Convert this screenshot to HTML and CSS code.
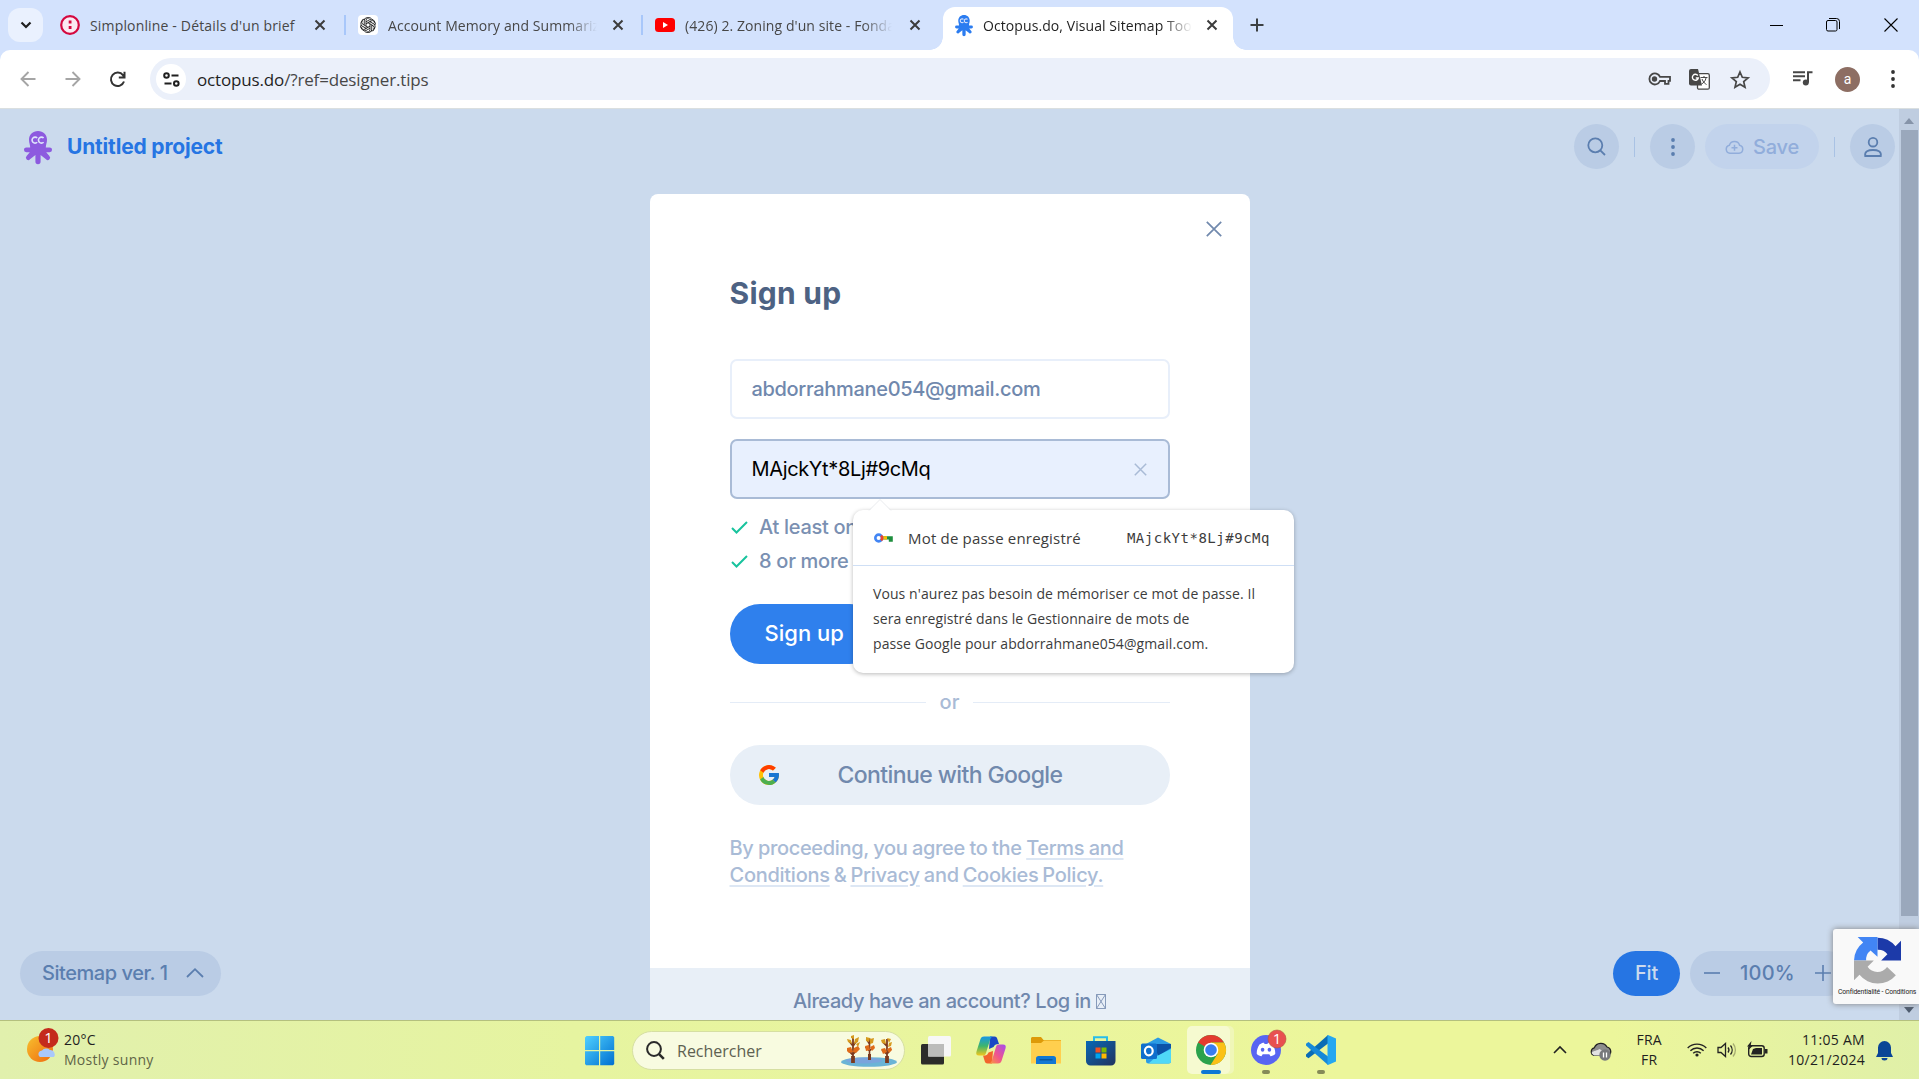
FILE: index.html
```html
<!DOCTYPE html>
<html lang="fr">
<head>
<meta charset="utf-8">
<title>Octopus.do, Visual Sitemap Tool</title>
<link rel="stylesheet" href="styles.css">
</head>
<body>
<div class="screen">
  <header class="tabstrip">
    <div class="tab-search"><svg width="12" height="8" viewBox="0 0 12 8"><path d="M1.5 1.5 6 6l4.500-4.500" fill="none" stroke="#1f1f1f" stroke-width="2.200"/></svg></div>
    <div class="tab tab-a">
      <svg width="20" height="20" viewBox="0 0 20 20"><circle cx="10" cy="10" r="8.800" fill="#fbe9f1" stroke="#d4083f" stroke-width="2.200"/><rect x="8.700" y="5.500" width="2.800" height="3" fill="#d4083f"/><rect x="8.700" y="11" width="2.800" height="3" fill="#d4083f"/></svg>
      <span class="tab-title">Simplonline - Détails d'un brief</span>
      <svg class="x" width="12" height="12" viewBox="0 0 12 12"><path d="M1.500 1.500l9 9M10.500 1.500l-9 9"/></svg>
    </div>
    <i class="tab-sep"></i>
    <div class="tab tab-b">
      <svg width="20" height="20" viewBox="0 0 20 20"><rect width="20" height="20" rx="4" fill="#fff"/><g fill="none" stroke="#222" stroke-width=".9"><path id="petal" d="M8 11.200V5.500a3 3 0 0 1 5.600-1.400M8 6.800l4-2.300a3 3 0 0 1 4.300 3.300"/><use href="#petal" transform="rotate(60 10 10)"/><use href="#petal" transform="rotate(120 10 10)"/><use href="#petal" transform="rotate(180 10 10)"/><use href="#petal" transform="rotate(240 10 10)"/><use href="#petal" transform="rotate(300 10 10)"/></g></svg>
      <span class="tab-title fade">Account Memory and Summarization</span>
      <svg class="x" width="12" height="12" viewBox="0 0 12 12"><path d="M1.500 1.500l9 9M10.500 1.500l-9 9"/></svg>
    </div>
    <i class="tab-sep"></i>
    <div class="tab tab-c">
      <svg width="20" height="20" viewBox="0 0 20 20"><rect y="3" width="20" height="14" rx="3.500" fill="#f00"/><path d="M8 7l5 3-5 3z" fill="#fff"/></svg>
      <span class="tab-title fade">(426) 2. Zoning d'un site - Fondamentaux</span>
      <svg class="x" width="12" height="12" viewBox="0 0 12 12"><path d="M1.500 1.500l9 9M10.500 1.500l-9 9"/></svg>
    </div>
    <div class="tab tab-active">
      <svg width="18" height="21" viewBox="0 0 28 33" fill="#2b7cf0"><use href="#octopus"/></svg>
      <span class="tab-title fade">Octopus.do, Visual Sitemap Tool</span>
      <svg class="x" width="12" height="12" viewBox="0 0 12 12"><path d="M1.500 1.500l9 9M10.500 1.500l-9 9"/></svg>
    </div>
    <svg class="new-tab" width="14" height="14" viewBox="0 0 14 14"><path d="M7 .5v13M.5 7h13" stroke="#3c4043" stroke-width="2"/></svg>
    <div class="win-controls">
      <svg width="13" height="13" viewBox="0 0 13 13"><path d="M0 6.500h13" stroke="#000"/></svg>
      <svg width="14" height="14" viewBox="0 0 14 14" fill="none" stroke="#000"><rect x=".5" y="2.500" width="10.500" height="10.500" rx="1.500"/><path d="M3 .5h7.500a3 3 0 0 1 3 3v7.500"/></svg>
      <svg width="14" height="14" viewBox="0 0 14 14"><path d="M.5 .5l13 13M13.500 .5l-13 13" stroke="#000" stroke-width="1.100"/></svg>
    </div>
  </header>

  <nav class="toolbar">
    <svg width="16" height="16" viewBox="0 0 16 16" fill="none" stroke="#a5a5a5" stroke-width="1.900"><path d="M15.500 8H2M8.500 1 1.500 8l7 7"/></svg>
    <svg class="nav-fwd" width="16" height="16" viewBox="0 0 16 16" fill="none" stroke="#a5a5a5" stroke-width="1.900"><path d="M.5 8H14M7.500 1l7 7-7 7"/></svg>
    <svg class="nav-reload" width="17" height="17" viewBox="0 0 17 17" fill="none" stroke="#333" stroke-width="2"><path d="M15 10.500A6.700 6.700 0 1 1 14 4.200l1 1.600M15.500 .8v5.700H9.800"/></svg>
    <div class="omnibox">
      <span class="site-info"><svg width="17" height="15" viewBox="0 0 17 15" fill="none" stroke="#1f1f1f" stroke-width="2"><circle cx="3.500" cy="3.500" r="2.300"/><path d="M8.500 3.500h7M1.500 11.500h7"/><circle cx="13.300" cy="11.500" r="2.300"/></svg></span>
      <span class="url">octopus.do<b>/?ref=designer.tips</b></span>
      <svg width="23" height="14" viewBox="0 0 23 14" fill="none" stroke="#474747" stroke-width="1.800"><path d="M12 4.900h10v4h-1.500v2.900h-3.500V9h-5a5.500 5.500 0 1 1 0-4.100z"/><circle cx="6.500" cy="7" r="2.700" fill="#474747" stroke="none"/></svg>
      <svg class="ob-tr" width="21" height="21" viewBox="0 0 21 21"><rect x="8.500" y="4.700" width="11.800" height="15.500" rx="1.500" fill="#fff" stroke="#474747" stroke-width="1.300"/><path d="M2 0h7l4 16.500H2a2 2 0 0 1-2-2V2a2 2 0 0 1 2-2z" fill="#474747"/><path d="M8.800 6.500A3 3 0 1 0 9.300 9H6.800" fill="none" stroke="#fff" stroke-width="1.400"/><path d="M11.500 8.500h7M15 7v1.500M17 9c-.5 3-2.500 5-4.500 6M13 10c1 3 3 4.500 4.500 5.500" fill="none" stroke="#474747"/></svg>
      <svg class="ob-star" width="20" height="19" viewBox="0 0 20 19" fill="none" stroke="#474747" stroke-width="1.700"><path d="M10 2l2.300 5.300 5.800.5-4.400 3.800 1.300 5.600-5-3-5 3 1.300-5.600L1.900 7.800l5.800-.5z"/></svg>
    </div>
    <svg class="tb-music" width="20" height="15" viewBox="0 0 20 15" fill="none" stroke="#474747" stroke-width="2"><path d="M0 1.200h12M0 5.200h12M0 9.200h7.500M15 11.500V1.200h4.500"/><circle cx="12.800" cy="11.500" r="3" fill="#474747" stroke="none"/></svg>
    <span class="tb-avatar">a</span>
    <svg class="tb-dots" width="4" height="18" viewBox="0 0 4 18" fill="#333"><circle cx="2" cy="2" r="1.900"/><circle cx="2" cy="9" r="1.900"/><circle cx="2" cy="16" r="1.900"/></svg>
  </nav>

  <main class="page">
    <div class="workspace">
      <div class="app-head">
        <svg class="logo" width="28" height="33" viewBox="0 0 28 33" fill="#8d5adf"><defs><g id="octopus"><path d="M14 0c5.200 0 9 3.800 9 8.800 0 3.200-1.200 5.200-1.200 7.700h3.900a2.300 2.300 0 0 1 0 4.700h-3.500l3.200 3.900a2.300 2.300 0 0 1-3.400 3.200L16.600 24v6.600a2.600 2.600 0 0 1-5.200 0V24L6 28.300a2.300 2.300 0 0 1-3.400-3.200l3.200-3.900H2.300a2.300 2.300 0 0 1 0-4.700h3.900C6.200 14 5 12 5 8.800 5 3.800 8.800 0 14 0z"/><path d="M13.200 7a3 3 0 1 0 0 4.200M19.600 7a3 3 0 1 0 0 4.200" fill="none" stroke="#dfe6fb" stroke-width="1.600"/></g></defs><use href="#octopus"/></svg>
        <span class="project">Untitled project</span>
        <span class="round"><svg width="19" height="19" viewBox="0 0 19 19" fill="none" stroke="#5b7eaf" stroke-width="1.800"><circle cx="8.300" cy="8.300" r="7"/><path d="M13.300 13.300l4.700 4.700"/></svg></span>
        <i class="head-sep"></i>
        <span class="round"><svg width="4" height="18" viewBox="0 0 4 18" fill="#5b7eaf"><circle cx="2" cy="2" r="1.900"/><circle cx="2" cy="9" r="1.900"/><circle cx="2" cy="16" r="1.900"/></svg></span>
        <span class="save"><svg width="19" height="14" viewBox="0 0 19 14" fill="none" stroke="#91addb" stroke-width="1.500"><path d="M5 13.200a4 4 0 0 1-.6-7.900 5.300 5.300 0 0 1 10.200 0A4 4 0 0 1 14 13.200zM9.500 4.800v6M6.500 7.800h6"/></svg>Save</span>
        <i class="head-sep"></i>
        <span class="round"><svg width="18" height="20" viewBox="0 0 18 20" fill="none" stroke="#5b7eaf" stroke-width="1.800"><circle cx="9" cy="5.200" r="4.300"/><path d="M1.200 19c-.8-4.500 3-6 7.800-6s8.600 1.500 7.800 6z"/></svg></span>
      </div>

      <section class="modal">
        <svg class="modal-x" width="16" height="16" viewBox="0 0 16 16"><path d="M.8 .8l14.400 14.400M15.200 .8.8 15.200" stroke="#7189ad" stroke-width="1.700"/></svg>
        <h1>Sign up</h1>
        <div class="field field-email">abdorrahmane054@gmail.com</div>
        <div class="field field-pass">MAjckYt*8Lj#9cMq<svg width="13" height="13" viewBox="0 0 13 13"><path d="M.8 .8l11.400 11.400M12.200 .8.8 12.200" stroke="#a9bbd6" stroke-width="1.500"/></svg></div>
        <ul class="rules">
          <li><svg width="17" height="13" viewBox="0 0 17 13"><path d="M1 7l4.500 4.500L16 1" fill="none" stroke="#18c39d" stroke-width="2"/></svg>At least one number</li>
          <li><svg width="17" height="13" viewBox="0 0 17 13"><path d="M1 7l4.500 4.500L16 1" fill="none" stroke="#18c39d" stroke-width="2"/></svg>8 or more characters</li>
        </ul>
        <div class="submit">Sign up</div>
        <div class="or">or</div>
        <div class="google">
          <svg width="24" height="24" viewBox="0 0 48 48"><path fill="#FFC107" d="M43.600 20H24v8h11.300A12 12 0 1 1 32 15l5.600-5.600A20 20 0 1 0 43.600 20z"/><path fill="#FF3D00" d="M6.300 14.700l6.600 4.800A12 12 0 0 1 32 15.100l5.700-5.700a20 20 0 0 0-31.400 5.300z"/><path fill="#4CAF50" d="M24 44c5.200 0 9.900-2 13.400-5.200l-6.200-5.200A12 12 0 0 1 12.700 28l-6.500 5A20 20 0 0 0 24 44z"/><path fill="#1976D2" d="M43.600 20H24v8h11.300a12 12 0 0 1-4.100 5.600l6.200 5.200C37 39.200 44 34 44 24c0-1.300-.1-2.600-.4-4z"/></svg>
          Continue with Google
        </div>
        <p class="terms"><span>By proceeding, you agree to the <u>Terms and</u></span><br><span class="tight"><u>Conditions</u> &amp; <u>Privacy</u> and <u>Cookies Policy.</u></span></p>
        <footer>Already have an account? Log in<svg width="10" height="15" viewBox="0 0 10 15"><path d="M.5 .5h9v14h-9zM.5 .5l9 14M9.500 .5l-9 14" fill="none" stroke="#7a90b2" stroke-width=".9"/></svg></footer>
      </section>

      <aside class="popup">
        <svg class="popup-arrow" width="22" height="12" viewBox="0 0 22 12"><path d="M0 12 11 .5 22 12z" fill="#fff"/><path d="M0 11.500 11 .5l11 11" fill="none" stroke="#e3e6ea" stroke-width=".8"/></svg>
        <div class="popup-head">
          <svg width="19" height="10" viewBox="0 0 19 10"><path d="M8 3.200h10.800v5.500h-4V6.500H8z" fill="#1e8e3e"/><path d="M8 3.200h5v3.300H8z" fill="#fbbc04"/><circle cx="4.700" cy="5" r="3.400" fill="none" stroke="#4285f4" stroke-width="2.600"/><path d="M7.100 2.600a3.400 3.400 0 0 1 0 4.800" fill="none" stroke="#ea4335" stroke-width="2.600"/></svg>
          <span>Mot de passe enregistré</span>
          <code>MAjckYt*8Lj#9cMq</code>
        </div>
        <p>Vous n'aurez pas besoin de mémoriser ce mot de passe. Il<br>sera enregistré dans le Gestionnaire de mots de<br>passe Google pour abdorrahmane054@gmail.com.</p>
      </aside>

      <div class="app-foot">
        <span class="version"><span>Sitemap ver. 1</span><svg width="18" height="10" viewBox="0 0 18 10"><path d="M1 9l8-7.800L17 9" fill="none" stroke="#5b7eaf" stroke-width="1.800"/></svg></span>
        <span class="fit">Fit</span>
        <span class="zoom"><svg width="16" height="16" viewBox="0 0 16 16"><path d="M0 8h16" stroke="#5b7eaf" stroke-width="1.600"/></svg><span>100%</span><svg width="16" height="16" viewBox="0 0 16 16"><path d="M0 8h16M8 0v16" stroke="#5b7eaf" stroke-width="1.600"/></svg></span>
      </div>
    </div>
    <div class="scrollbar">
      <svg width="10" height="6" viewBox="0 0 10 6"><path d="M0 6 5 0l5 6z" fill="#8694a9"/></svg>
      <i></i>
      <svg width="10" height="6" viewBox="0 0 10 6"><path d="M0 0h10L5 6z" fill="#4e5b6e"/></svg>
    </div>
    <div class="captcha">
      <svg width="47" height="47" viewBox="0 0 64 64"><path fill="#1c3aa9" d="M64 32V5l-7.500 7.500A32 32 0 0 0 32 1v16.500a16 16 0 0 1 13.500 6L37 32z"/><path fill="#4285f4" d="M32 0H5l7.500 7.500A32 32 0 0 0 0 32h16.500a16 16 0 0 1 6-13.500L32 27z"/><path fill="#ababab" d="M0 32v27l7.500-7.500A32 32 0 0 0 57 52L45 41a16 16 0 0 1-26.500-.5L27 32z"/></svg>
      <span>Confidentialité - Conditions</span>
    </div>
  </main>

  <footer class="taskbar">
    <div class="weather">
      <svg width="31" height="36" viewBox="0 0 31 36"><defs><linearGradient id="sun" x1="0" y1="0" x2="1" y2="1"><stop offset="0" stop-color="#f7c02e"/><stop offset="1" stop-color="#f0690f"/></linearGradient></defs><circle cx="13" cy="21" r="13" fill="url(#sun)"/><path d="M13 29a4 4 0 0 1-1-5 5 5 0 0 1 3-1.500 5.500 5.500 0 0 1 8-.5 4.500 4.500 0 0 1 4 7z" fill="#a9c8fb"/><circle cx="21.500" cy="10" r="10" fill="#c42b1c"/><text x="21.500" y="15" class="badge">1</text></svg>
      <span class="two-lines"><span class="deg">20°C</span><br><em>Mostly sunny</em></span>
    </div>
    <svg class="start" width="30" height="30" viewBox="0 0 30 30"><defs><linearGradient id="win" x1="0" y1="0" x2="1" y2="1"><stop offset="0" stop-color="#4fd0ff"/><stop offset="1" stop-color="#006fd0"/></linearGradient></defs><path fill="url(#win)" d="M1.500 0H14v14H0V1.500zM15.200 0H28l1.200 1.200V14h-14zM0 15.200h14v14H1.200L0 28zM15.200 15.200h14V28L28 29.200H15.200z"/></svg>
    <div class="search">
      <svg width="19" height="19" viewBox="0 0 19 19" fill="none" stroke="#2a2a2a" stroke-width="2"><circle cx="8" cy="8" r="6.900"/><path d="M12.800 12.800l5 5" stroke-width="2.600"/></svg>
      <span>Rechercher</span>
      <svg class="trees" width="56" height="32" viewBox="0 0 56 32"><ellipse cx="28" cy="27" rx="28" ry="4.800" fill="#6ab4d6"/><ellipse cx="23" cy="25.500" rx="18" ry="3" fill="#7aa4dc"/><g stroke="#7c3a1e" fill="none"><path d="M12 28V3M12 20l-5-5M12 19l5-5M12 11 8 6M12 11l4-6" stroke-width="1.800"/><path d="M12 28v-7" stroke-width="3.800"/><path d="M28.500 25V3M28.500 16l-4-4M28.500 16l4-4M28.500 9l-3-5" stroke-width="1.600"/><path d="M28.500 25v-6" stroke-width="3"/><path d="M46 28V4M46 19l-5-4M46 19l4-5M46 11l-4-4" stroke-width="1.800"/><path d="M46 28v-7" stroke-width="3.800"/></g><g fill="#d69a1e"><path d="M6 4l4 1 1 4-4-2zM14 4l4-2-1 5-4 2zM10 1l3-1v4l-3-1zM25 2l4 1-1 4-3-1zM29 4l4-1-1 5-3 1zM40 5l4-1 1 5-4-1zM46 3l4 1-2 4zM48 8l3-1-1 4-3 1zM15 9l4-2-2 5z"/></g><g fill="#df6b18"><path d="M6 13l4-1 2 5-4 1-2-2zM13 13l4-2 2 3-4 4-3-1zM24 11l4-1 1 5-4 1zM29 12l4-2 1 3-3 3zM40 14l4-1 2 4-4 2zM46 14l4-2 1 3-3 3z"/></g></svg>
    </div>
    <div class="apps">
      <svg width="30" height="30" viewBox="0 0 30 30"><rect y="8" width="23" height="20.500" rx="1.500" fill="#2c2c2a"/><rect x="7" y="0" width="23" height="20.500" rx="1.500" fill="#f7f7f7"/><rect x="7" y="8" width="16" height="12.500" fill="#bcbcba"/></svg>
      <svg width="30" height="30" viewBox="0 0 30 30"><defs><linearGradient id="cpa" x1="0" y1="0" x2="0" y2="1"><stop offset="0" stop-color="#1596e8"/><stop offset=".5" stop-color="#3db56c"/><stop offset="1" stop-color="#f2c81c"/></linearGradient><linearGradient id="cpb" x1="1" y1="0" x2="0" y2="1"><stop offset="0" stop-color="#a44df0"/><stop offset=".55" stop-color="#f0558c"/><stop offset="1" stop-color="#fb9a3c"/></linearGradient></defs><path d="M14 .5h4.500c1.800 0 2.500 1 3 3L23 8c-3.500 0-4.500 1-5.500 3L13 13z" fill="#1a47c4"/><path d="M16 27.500h-4.500c-1.800 0-2.500-1-3-3L7 19.500c3.500 0 4.500-.5 5.500-3L17 15z" fill="#f2652c"/><path d="M8 .5h8.500c-1.500 1-2 2-2.500 3.500L10 17c-.6 1.800-1.500 2.500-3 2.500H3c-2.500 0-3.300-1.500-2.500-4L4.500 3C5 1.300 6.500.5 8 .5z" fill="url(#cpa)"/><path d="M22 27.500h-8.500c1.500-1 2-2 2.500-3.500L20 11c.6-1.800 1.500-2.500 3-2.500h4c2.500 0 3.300 1.500 2.500 4L25.500 25c-.5 1.700-2 2.500-3.500 2.500z" fill="url(#cpb)"/></svg>
      <svg width="30" height="30" viewBox="0 0 30 30"><path d="M0 2.500C0 1.700.7 1 1.500 1H10l2.500 3H30v8H0z" fill="#dd9a08"/><path d="M0 7h10l3-2.500h17v23H0z" fill="#ffcf4e"/><path d="M5 28v-5.500c0-1.500 1-2.500 2.500-2.500h15c1.500 0 2.500 1 2.500 2.500V28z" fill="#1277d3"/><path d="M8.500 23.800h13" stroke="#0a4f95" stroke-width="1.200"/></svg>
      <svg width="30" height="30" viewBox="0 0 30 30"><defs><linearGradient id="st" x1="0" y1="0" x2="1" y2="1"><stop offset="0" stop-color="#0968b5"/><stop offset="1" stop-color="#22335f"/></linearGradient></defs><path d="M8 6V1.200h13V6" fill="none" stroke="#28bdea" stroke-width="2"/><path d="M0 5h29.500v20a4.500 4.500 0 0 1-4.500 4.500H4.500A4.500 4.500 0 0 1 0 25z" fill="url(#st)"/><path d="M9.500 11.500h5v5h-5z" fill="#f25022"/><path d="M15.500 11.500h5v5h-5z" fill="#7fba00"/><path d="M9.500 17.500h5v5h-5z" fill="#00a4ef"/><path d="M15.500 17.500h5v5h-5z" fill="#ffb900"/></svg>
      <svg width="30" height="30" viewBox="0 0 30 30"><path d="M5 8l12-6.500L30 8v17a2.500 2.500 0 0 1-2.500 2.500h-20A2.500 2.500 0 0 1 5 25z" fill="#2a9be4"/><path d="M13 8l17 0v4l-13 8z" fill="#0b53a8"/><path d="M30 13v12a2.500 2.500 0 0 1-2.500 2.500h-20L16 20z" fill="#4fd8f8"/><rect y="7.500" width="16" height="15.500" rx="1.500" fill="#0f6fcd"/><ellipse cx="7.800" cy="15" rx="3.900" ry="4.400" fill="none" stroke="#fff" stroke-width="2.200"/></svg>
      <span class="app-active"><svg width="30" height="30" viewBox="0 0 30 30"><circle cx="15" cy="15" r="15" fill="#2ba24c"/><path d="M15 15 2 7.500A15 15 0 0 1 28 7.500H15z" fill="#e33b2e"/><path d="M15 7.500h13A15 15 0 0 1 14.500 30l7-11z" fill="#fbc116"/><circle cx="15" cy="15" r="7.300" fill="#fff"/><circle cx="15" cy="15" r="5.800" fill="#3a7df0"/></svg><i></i></span>
      <span class="app-run"><svg width="36" height="36" viewBox="0 0 36 36"><circle cx="15" cy="20" r="15" fill="#5865f2"/><path d="M8.500 14.500c2-1.500 3.500-1.700 4.500-1.800l.6 1.200h2.800l.6-1.200c1 .1 2.500.3 4.500 1.800 2 3 3 6.500 2.700 9.500-1.500 1.500-3 2-4.700 2.200l-1.200-2H11.700l-1.200 2C8.800 26 7.300 25.500 5.800 24c-.3-3 .7-6.500 2.700-9.500z" fill="#fff"/><ellipse cx="11.600" cy="19.800" rx="1.800" ry="2" fill="#5865f2"/><ellipse cx="18.400" cy="19.800" rx="1.800" ry="2" fill="#5865f2"/><circle cx="26" cy="9" r="9" fill="#e85050" stroke="#b0563c" stroke-width=".6"/><text x="26" y="14" class="badge">1</text></svg><i></i></span>
      <span class="app-run vs"><svg width="30" height="30" viewBox="0 0 30 30"><path d="M22 8.500 2.500 23.200 0 21.500v-2L22 0z" fill="#0a6cb5"/><path d="M0 10.500V8.800L2.500 7 22 21.500V30z" fill="#1789d8"/><path d="M22 0l8 3.500v23L22 30c-.5 0-.5-.5-.5-1.500v-27c0-1 0-1.500.5-1.500z" fill="#25a7f0"/></svg><i></i></span>
    </div>
    <div class="tray">
      <svg class="tr-up" width="14" height="8" viewBox="0 0 14 8"><path d="M1 7l6-6 6 6" fill="none" stroke="#222" stroke-width="1.600"/></svg>
      <svg class="tr-cloud" width="21" height="19" viewBox="0 0 21 19"><path d="M4 13.500a4 4 0 0 1 .3-7.700A7 7 0 0 1 17 5a4.500 4.500 0 0 1 2 8z" fill="#8d8d8d" stroke="#222" stroke-width="1.200"/><path d="M1.500 11c2-3 6-2 8-4l8 5-2 1.500H4z" fill="#e2e2e2"/><circle cx="15" cy="13" r="5.700" fill="#77797c"/><path d="M13.500 10.500v5M16.500 10.500v5" stroke="#fff" stroke-width="1.300"/></svg>
      <span class="two-lines tr-lang">FRA<br>FR</span>
      <svg class="tr-wifi" width="20" height="15" viewBox="0 0 20 15" fill="none" stroke="#222" stroke-width="1.400"><path d="M.7 6a13 13 0 0 1 18.600 0M3.400 8.800a9.300 9.300 0 0 1 13.200 0M6.200 11.300a5.400 5.400 0 0 1 7.600 0"/><circle cx="10" cy="13" r="1.600" fill="#222" stroke="none"/></svg>
      <svg class="tr-vol" width="20" height="16" viewBox="0 0 20 16" fill="none" stroke="#222" stroke-width="1.300"><path d="M1 5.500h3L8.500 1.500v13L4 10.500H1zM11 5.500a4 4 0 0 1 0 5M13.500 3.500a7 7 0 0 1 0 9"/><path d="M16 1.500a10 10 0 0 1 0 13" stroke="#a5ac70"/></svg>
      <svg class="tr-bat" width="21" height="17" viewBox="0 0 21 17"><rect x="1.700" y="4.700" width="15.500" height="10.800" rx="2.500" fill="none" stroke="#222" stroke-width="1.400"/><path d="M4 13.500 6 8l3-1h6v6.500zM18 8h2.500v4.500H18zM4.500 0 0 5.500h2.500L1.500 9 6.500 4H3.800z" fill="#222"/></svg>
      <span class="two-lines tr-time">11:05 AM<br>10/21/2024</span>
      <svg class="tr-bell" width="17" height="20" viewBox="0 0 17 20" fill="#0a4596"><path d="M8.500 0a6.500 6.500 0 0 1 6.500 6.500V12l2 4H0l2-4V6.500A6.500 6.500 0 0 1 8.500 0zM5.500 17h6a3 2.500 0 0 1-6 0z"/></svg>
    </div>
  </footer>
</div>
</body>
</html>
```

FILE: styles.css
```css
* { box-sizing: border-box; }
html, body { margin: 0; overflow: hidden; }
body { font-family: "Open Sans", "Noto Sans", sans-serif; color: #1f1f1f; }
svg { display: block; flex: none; overflow: visible; }
span { white-space: nowrap; }
.screen { width: 1919px; height: 1079px; display: flex; flex-direction: column; background: #d3e2fd; }

/* Browser tab strip */
.tabstrip { height: 50px; display: flex; align-items: center; background: #d3e2fd; flex: none; }
.tab-search { width: 35px; height: 34px; margin-left: 8px; border-radius: 12px; background: #eaf1fe; display: flex; align-items: center; justify-content: center; }
.tab { display: flex; align-items: center; height: 43px; margin-top: 7px; padding-bottom: 7px; font-size: 14px; color: #474747; flex: none; }
.tab .x { fill: none; stroke: #3c3c3c; stroke-width: 2; }
.tab-title { overflow: hidden; flex: none; margin-left: 10px; line-height: 24px; padding-top: 1px; letter-spacing: 0.08px; }
.fade { -webkit-mask-image: linear-gradient(90deg, #000 86%, transparent); mask-image: linear-gradient(90deg, #000 86%, transparent); }
.tab-a { width: 301px; padding-left: 17px; }
.tab-a .tab-title { width: 224px; letter-spacing: 0.16px; }
.tab-b { width: 295px; padding-left: 12px; }
.tab-b .tab-title { width: 209px; margin-right: 15px; }
.tab-c { width: 300px; padding-left: 12px; }
.tab-c .tab-title { width: 207px; margin-right: 17px; }
.tab-sep { width: 2px; height: 20px; background: #a8c7fa; }
.tab-active { position: relative; width: 290px; padding-left: 12px; background: #fff; border-radius: 12px 12px 0 0; color: #1f1f1f; }
.tab-active::before, .tab-active::after { content: ""; position: absolute; bottom: 0; width: 13px; height: 13px; }
.tab-active::before { left: -13px; background: radial-gradient(circle at 0 0, transparent 12.5px, #fff 13px); }
.tab-active::after { right: -13px; background: radial-gradient(circle at 100% 0, transparent 12.5px, #fff 13px); }
.tab-active .tab-title { width: 209px; margin-right: 14px; }
.new-tab { margin-left: 17px; }
.win-controls { margin-left: auto; display: flex; align-items: center; gap: 44px; padding-right: 21px; }
.win-controls svg:first-child { margin-right: -1px; }

/* Address bar row */
.toolbar { height: 59px; flex: none; background: #fff; border-radius: 10px 10px 0 0; border-bottom: 1px solid #dadfe0; display: flex; align-items: center; padding-left: 20px; }
.nav-fwd { margin-left: 29px; }
.nav-reload { margin-left: 28px; }
.omnibox { width: 1620px; height: 42px; margin-left: 24px; border-radius: 21px; background: #ebf0fa; display: flex; align-items: center; padding-left: 6px; }
.site-info { width: 30px; height: 30px; border-radius: 50%; background: #fff; display: flex; align-items: center; justify-content: center; }
.url { margin-left: 11px; width: 1451px; font-size: 17px; line-height: 24px; letter-spacing: -0.156px; padding-top: 1px; }
.url b { font-weight: 400; color: #474747; }
.ob-tr { margin-left: 18px; }
.ob-star { margin-left: 20px; }
.tb-music { margin-left: 23px; margin-top: -2px; }
.tb-avatar { width: 25px; height: 25px; margin-left: 22px; border-radius: 50%; background: #8d6e63; color: #fff; font: 14px/24px Roboto, sans-serif; text-align: center; }
.tb-dots { margin-left: 31px; }

/* Web page */
.page { position: relative; height: 911px; flex: none; display: flex; background: #cbdaed; font-family: Inter, "Liberation Sans", sans-serif; font-weight: 500; }
.workspace { width: 1899px; display: grid; grid-template-rows: 85px 757px 69px; justify-items: center; }
.app-head { width: 100%; display: flex; align-items: center; padding: 0 4px 10px 24px; height: 85px; }
.logo { margin: 1px 0 0; }
.project { margin-left: 15px; width: 1507px; font-size: 21px; font-weight: 700; letter-spacing: -0.18px; color: #2675e3; }
.round { width: 45px; height: 45px; flex: none; border-radius: 50%; background: #bacce5; display: flex; align-items: center; justify-content: center; }
.head-sep { width: 1px; height: 20px; margin: 0 15px; background: #a9c2e4; }
.save { width: 114px; height: 45px; margin-left: 10px; border-radius: 23px; background: #c2d3ec; display: flex; align-items: center; padding-left: 20px; gap: 9px; font-size: 20px; letter-spacing: -0.2px; color: #91addb; }

.modal { grid-row: 2 / 4; grid-column: 1; width: 600px; height: 826px; background: #fff; border-radius: 8px 8px 0 0; padding: 27px 80px 0; display: flex; flex-direction: column; }
.modal-x { align-self: flex-end; margin-right: -52px; }
.modal h1 { margin: 38px 0 0; font-size: 30px; line-height: 36px; font-weight: 700; letter-spacing: 0.27px; color: #4d6283; }
.field { height: 60px; margin-top: 20px; flex: none; border: 2px solid #e8effa; border-radius: 7px; padding: 0 21px 0 20px; display: flex; align-items: center; justify-content: space-between; font-size: 20px; font-weight: 400; color: #7088ad; }
.field-email { margin-top: 48px; font-weight: 500; letter-spacing: -0.33px; }
.field-pass { background: #e8f0fe; border-color: #a9bbd6; color: #000; letter-spacing: -0.35px; }
.rules { list-style: none; margin: 11px 0 0; padding: 0; font-size: 20px; letter-spacing: -0.29px; color: #7a90b2; }
.rules li { height: 34px; display: flex; align-items: center; gap: 11.5px; padding-left: 1px; white-space: nowrap; }
.submit { width: 150px; height: 60px; flex: none; margin-top: 26px; border-radius: 30px; background: #2f80ed; color: #fff; font-size: 22px; display: flex; align-items: center; padding: 0 0 2px 35px; }
.or { margin-top: 25px; height: 26px; display: flex; align-items: center; gap: 14px; color: #a9bbd6; font-size: 20px; }
.or::before, .or::after { content: ""; flex: 1; height: 1px; background: #e4ecf7; }
.google { height: 60px; flex: none; margin-top: 30px; border-radius: 30px; background: #e8eff7; display: flex; align-items: center; padding: 0 0 1px 27px; gap: 57px; font-size: 23px; letter-spacing: -0.59px; color: #7189ad; }
.terms { margin: 30px 0 0; font-size: 20px; line-height: 27px; letter-spacing: -0.35px; word-spacing: -0.4px; color: #a9bbd6; }
.terms .tight { letter-spacing: -0.27px; word-spacing: -1.1px; }
.terms u { text-decoration-color: #dde7f4; text-decoration-thickness: 2px; text-underline-offset: 3px; }
.modal footer { margin: auto -80px 0; height: 52px; background: #e8eff7; display: flex; justify-content: center; gap: 5px; align-items: center; padding-top: 14px; font-size: 20px; letter-spacing: -0.41px; color: #7088ad; }

/* Saved password bubble */
.popup { position: absolute; left: 853px; top: 401px; width: 441px; height: 163px; background: #fff; border-radius: 10px; box-shadow: 0 1px 4px rgba(0,0,0,.28); font-family: "Open Sans", "Noto Sans", sans-serif; font-weight: 400; color: #3c3c3c; }
.popup-arrow { position: absolute; left: 16px; top: -11px; }
.popup-head { height: 56px; border-bottom: 1px solid #cfdff5; display: flex; align-items: center; padding-left: 21px; font-size: 15px; }
.popup-head span { margin-left: 15px; letter-spacing: 0.19px; }
.popup-head code { margin-left: 46px; font: 14px "DejaVu Sans Mono", "Liberation Mono", monospace; letter-spacing: 0.51px; }
.popup p { margin: 15px 20px; font-size: 14px; line-height: 25px; letter-spacing: 0.085px; white-space: nowrap; }

.app-foot { grid-row: 3; grid-column: 1; width: 100%; display: flex; padding-left: 20px; color: #5b7eaf; font-size: 20px; }
.version { width: 201px; height: 45px; border-radius: 23px; background: #bacce5; display: flex; align-items: center; padding: 0 0 1px 22px; gap: 18px; letter-spacing: -0.45px; }
.fit { width: 67px; height: 45px; margin-left: 1392px; border-radius: 23px; background: #2675e3; color: #cbdaed; display: flex; align-items: center; justify-content: center; letter-spacing: -0.2px; padding-bottom: 1px; }
.zoom { width: 160px; height: 45px; margin-left: 10px; border-radius: 23px; background: #bacce5; display: flex; align-items: center; gap: 20px; padding: 0 0 1px 14px; }
.zoom span { letter-spacing: 0.25px; }
.scrollbar { width: 20px; background: #bfcde0; display: flex; flex-direction: column; align-items: center; padding-top: 9px; }
.scrollbar i { width: 17px; height: 786px; margin: 6px 0 91px; background: #9aa8bc; }
.captcha { position: absolute; right: 0; top: 820px; width: 86px; height: 75px; background: #f9f9f9; border-radius: 3px 0 0 3px; box-shadow: 0 0 6px #808080; padding: 8px 0 0 5px; font: 6.8px/17px Roboto, sans-serif; letter-spacing: -0.13px; color: #222; }
.captcha svg { margin-left: 16px; }
.captcha span { display: inline-block; vertical-align: top; }

/* Windows taskbar */
.taskbar { height: 59px; flex: none; border-top: 1px solid #b4c07e; background: linear-gradient(90deg, #e1f0ad, #e6f4a0 30%, #ecf69b 70%, #ecf69b 84%, #e0f0a8); display: flex; font-size: 14px; }
.badge { font: 15px "Open Sans", sans-serif; fill: #fff; text-anchor: middle; }
.two-lines { line-height: 20px; letter-spacing: 0.28px; }
.two-lines em { font-style: normal; color: #5f6547; }
.weather { width: 558px; padding: 7px 0 0 27px; display: flex; gap: 6px; }
.weather .two-lines { padding-top: 2px; }
.start { margin: 15px 0 0 27px; }
.search { width: 273px; height: 39px; margin: 10px 0 0 17px; border: 1px solid #d6dfa2; border-radius: 20px; background: #f8fbe0; display: flex; align-items: center; padding: 0 7px 0 13px; font-size: 16px; color: #5e6150; }
.search span { margin-left: 12px; }
.trees { margin-left: auto; }
.apps { display: flex; padding: 15px 0 0 16px; gap: 25px; }
.app-active { position: relative; width: 43px; height: 48px; margin: -10px -4px 0 -9px; border-radius: 5px; background: #f6fad0; box-shadow: 4px 0 0 #f0f7b8; padding: 9px 0 0 9px; }
.app-active i { position: absolute; left: 14px; bottom: 0; width: 20px; height: 4px; border-radius: 2px; background: #0f78d4; }
.app-run { position: relative; width: 30px; }
.app-run svg { margin-top: -6px; }
.app-run i { position: absolute; left: 11px; top: 34px; width: 8px; height: 4px; border-radius: 2px; background: #858a58; }
.app-run.vs svg { margin-top: -1px; }
.tray { margin-left: auto; display: flex; padding-right: 26px; }
.tr-up { margin-top: 25px; }
.tr-cloud { margin: 21px 0 0 23px; }
.tr-lang { margin: 9px 0 0 25px; text-align: center; }
.tr-wifi { margin: 21px 0 0 25px; }
.tr-vol { margin: 21px 0 0 10px; }
.tr-bat { margin: 20px 0 0 10px; }
.tr-time { margin: 9px 0 0 20px; width: 77px; text-align: right; }
.tr-bell { margin: 20px 0 0 11px; }
```
